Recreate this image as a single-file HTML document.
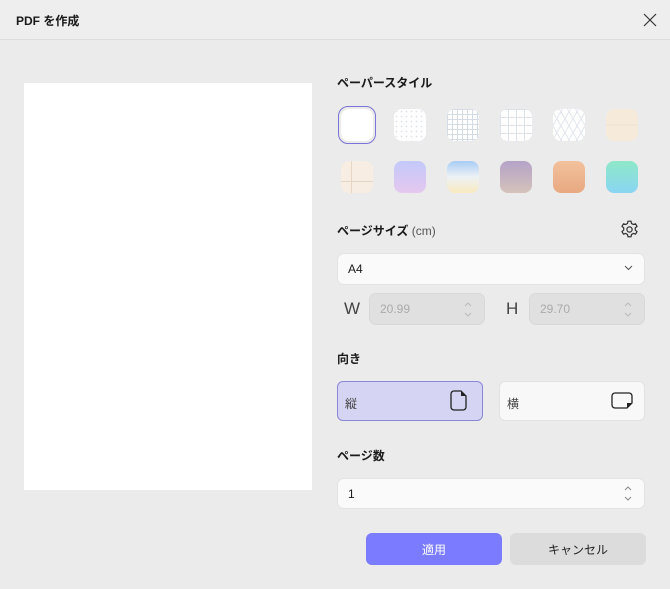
<!DOCTYPE html>
<html><head><meta charset="utf-8"><style>
*{box-sizing:border-box;margin:0;padding:0}
body{width:670px;height:589px;background:#ebebeb;font-family:"Liberation Sans","Noto Sans CJK JP",sans-serif;position:relative;overflow:hidden;color:#1a1a1a}
.a{position:absolute}
.t{font-size:12px}
.tile{position:absolute;width:32px;height:32px;border-radius:8px;overflow:hidden}
.in{position:absolute;background:#fafafa;border-radius:7px;border:1px solid #e3e3e3;font-size:12px;padding-left:10px;display:flex;align-items:center}
.dis{background:#e0e0e0;color:#aaa;border-color:#d8d8d8}
</style></head><body>
<div class="a" style="left:0;top:0;width:670px;height:40px;border-bottom:1px solid #dcdcdc;background:#eeeeee"></div>
<div class="a t" style="left:16px;top:12px;font-weight:bold">PDF を作成</div>
<svg class="a" style="left:642px;top:12px" width="16" height="16"><path d="M2 2L14 14M14 2L2 14" stroke="#333" stroke-width="1.2"/></svg>
<div class="a" style="left:24px;top:83px;width:288px;height:407px;background:#fff"></div>
<div class="a t" style="left:337px;top:74px;font-weight:bold">ペーパースタイル</div>
<div class="a" style="left:338px;top:106px;width:38px;height:38px;border:1.5px solid #7a74d8;border-radius:10px"></div>
<div class="tile" style="left:341px;top:109px;background:#fff"></div>
<div class="tile" style="left:394px;top:109px;background-color:#fff;background-image:radial-gradient(#dfe2ea 0.7px,transparent 1px);background-size:5px 5px"></div>
<div class="tile" style="left:447px;top:109px;background-color:#fff;background-image:linear-gradient(#d5dbe4 1px,transparent 1px),linear-gradient(90deg,#d5dbe4 1px,transparent 1px);background-size:5px 5px"></div>
<div class="tile" style="left:500px;top:109px;background-color:#fff;background-image:linear-gradient(#dde2ea 1px,transparent 1px),linear-gradient(90deg,#dde2ea 1px,transparent 1px);background-size:8px 8px"></div>
<div class="tile" style="left:553px;top:109px;background-color:#fff;background-image:repeating-linear-gradient(60deg,#e2e6ec 0 1px,transparent 1px 7px),repeating-linear-gradient(-60deg,#e2e6ec 0 1px,transparent 1px 7px)"></div>
<div class="tile" style="left:606px;top:109px;background:linear-gradient(#f6eadb 48%,#eadccc 50%,#f6eadb 52%)"></div>
<div class="tile" style="left:341px;top:161px;background:#f8ede2"><div class="a" style="left:10px;top:0;width:1px;height:32px;background:#e6d6c6"></div><div class="a" style="left:0;top:20px;width:32px;height:1px;background:#e6d6c6"></div></div>
<div class="tile" style="left:394px;top:161px;background:linear-gradient(#c3c9fb,#e5c8ee)"></div>
<div class="tile" style="left:447px;top:161px;background:linear-gradient(#a8ccf5,#eef2f5 50%,#f8eac0)"></div>
<div class="tile" style="left:500px;top:161px;background:linear-gradient(#b4a3c8,#d5c2bb)"></div>
<div class="tile" style="left:553px;top:161px;background:linear-gradient(#f2c19c,#e8a981)"></div>
<div class="tile" style="left:606px;top:161px;background:linear-gradient(#8ee8c8,#8ad5f2)"></div>
<div class="a t" style="left:337px;top:222px;font-weight:bold">ページサイズ <span style="font-weight:normal;color:#555">(cm)</span></div>
<svg class="a" style="left:619px;top:219px" width="21" height="21" viewBox="0 0 24 24" fill="none" stroke="#333" stroke-width="1.4"><circle cx="12" cy="12" r="3"/><path d="M10.3 2.5h3.4l.6 2.6 2 1.2 2.6-.8 1.7 2.9-2 1.8v2.4l2 1.8-1.7 2.9-2.6-.8-2 1.2-.6 2.6h-3.4l-.6-2.6-2-1.2-2.6.8-1.7-2.9 2-1.8v-2.4l-2-1.8 1.7-2.9 2.6.8 2-1.2z"/></svg>
<div class="in" style="left:337px;top:253px;width:308px;height:32px">A4</div>
<svg class="a" style="left:624px;top:265px" width="9" height="6"><path d="M1 1l3.5 3.5L8 1" stroke="#555" fill="none"/></svg>
<div class="a" style="left:344px;top:299px;font-size:17px;color:#444">W</div>
<div class="in dis" style="left:369px;top:293px;width:116px;height:32px">20.99</div>
<div class="a" style="left:506px;top:299px;font-size:17px;color:#444">H</div>
<div class="in dis" style="left:529px;top:293px;width:116px;height:32px">29.70</div>
<svg class="a" style="left:463px;top:301px" width="10" height="17"><path d="M2 5l3-3 3 3M2 12l3 3 3-3" stroke="#bbb" fill="none"/></svg>
<svg class="a" style="left:623px;top:301px" width="10" height="17"><path d="M2 5l3-3 3 3M2 12l3 3 3-3" stroke="#bbb" fill="none"/></svg>
<div class="a t" style="left:337px;top:350px;font-weight:bold">向き</div>
<div class="a" style="left:337px;top:381px;width:146px;height:40px;background:#d5d5f3;border:1px solid #8a86d8;border-radius:6px"></div>
<div class="a t" style="left:345px;top:395px;color:#444">縦</div>
<svg class="a" style="left:450px;top:390px" width="18" height="22"><path d="M4 1h7l5 5v11a3 3 0 0 1-3 3H4a3 3 0 0 1-3-3V4a3 3 0 0 1 3-3z" fill="none" stroke="#222" stroke-width="1.3"/><path d="M11 1l5 5h-5z" fill="#222"/></svg>
<div class="a" style="left:499px;top:381px;width:146px;height:40px;background:#f8f8f8;border:1px solid #e2e2e2;border-radius:6px"></div>
<div class="a t" style="left:507px;top:395px;color:#444">横</div>
<svg class="a" style="left:611px;top:392px" width="22" height="18"><path d="M4 1h14a3 3 0 0 1 3 3v7l-5 5H4a3 3 0 0 1-3-3V4a3 3 0 0 1 3-3z" fill="none" stroke="#222" stroke-width="1.3"/><path d="M21 11l-5 5v-5z" fill="#222"/></svg>
<div class="a t" style="left:337px;top:447px;font-weight:bold">ページ数</div>
<div class="in" style="left:337px;top:478px;width:308px;height:31px">1</div>
<svg class="a" style="left:623px;top:485px" width="10" height="17"><path d="M2 5l3-3 3 3M2 12l3 3 3-3" stroke="#888" fill="none"/></svg>
<div class="a t" style="left:366px;top:533px;width:136px;height:32px;background:#7b7bff;color:#fff;border-radius:6px;display:flex;align-items:center;justify-content:center">適用</div>
<div class="a t" style="left:510px;top:533px;width:136px;height:32px;background:#dcdcdc;color:#222;border-radius:6px;display:flex;align-items:center;justify-content:center">キャンセル</div>
</body></html>
